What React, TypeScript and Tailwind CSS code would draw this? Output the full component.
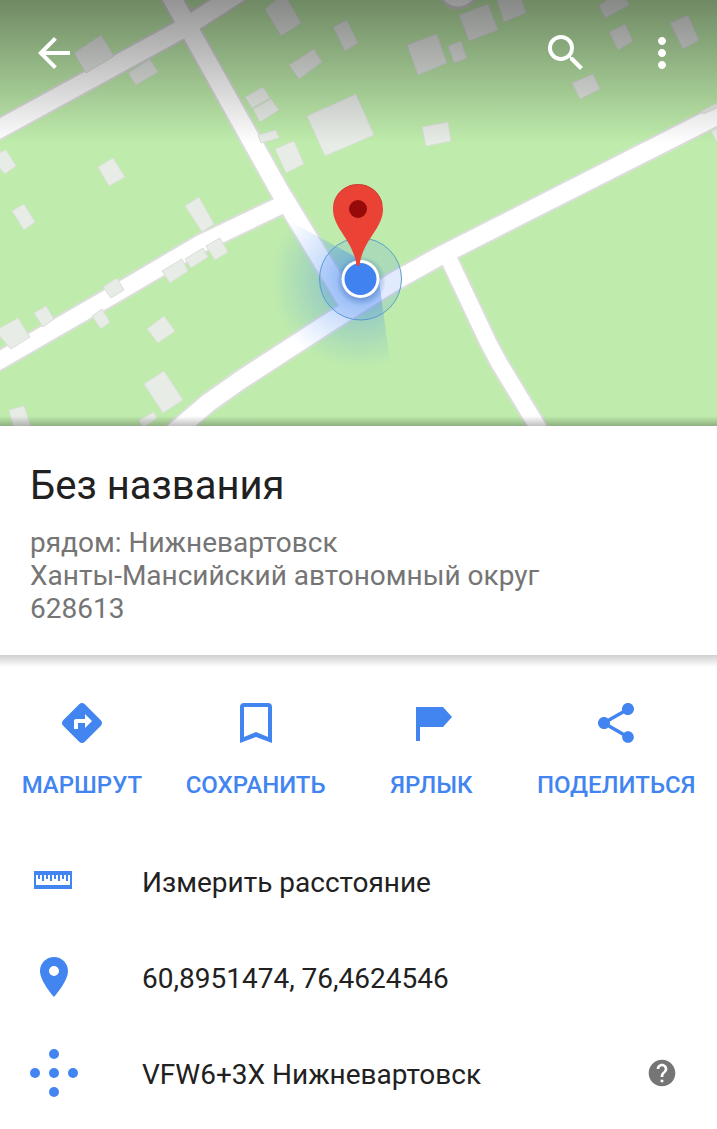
import React from 'react';
import { MdArrowBack, MdDirections, MdHelp, MdMoreVert, MdPlace, MdSearch, MdShare } from 'react-icons/md';

const ROADS = [
  { d: 'M-10 134 L184 28 L226 1 L262 -22', outer: 22, inner: 18 },
  { d: 'M166 -12 L173 0 L279 190 L352 310', outer: 22, inner: 18 },
  { d: 'M-10 366 L115 294 L200 244 L290 201', outer: 21, inner: 17 },
  { d: 'M172 434 L208 403 L242 379 L330 322 L395 281 L440 256 L730 109', outer: 22, inner: 18 },
  { d: 'M448 257 L488 342 L498 361 L542 434', outer: 20, inner: 16 },
];

const BUILDINGS = [
  '74,53 101,35 114,56 86,73',
  '128,73 150,59 158,72 136,85',
  '-4,154 6,150 16,166 5,174 -4,164',
  '98,167 113,158 125,177 109,186',
  '12,211 24,204 35,222 24,230',
  '185,206 199,197 214,224 202,232',
  '265,9 279,-2 288,0 301,23 281,36',
  '333,27 347,20 358,43 345,51',
  '289,65 314,49 322,62 299,79',
  '245,97 263,87 270,98 252,108',
  '253,109 271,99 279,110 260,122',
  '258,135 276,130 279,138 261,143',
  '275,149 294,141 304,164 286,173',
  '307,116 356,94 374,135 325,156',
  '407,45 437,34 447,63 418,75',
  '448,46 461,41 467,58 454,63',
  '459,15 488,4 498,30 469,41',
  '496,-2 520,-6 526,13 504,22',
  '599,5 614,-4 626,-2 629,5 605,18',
  '609,32 625,24 633,41 618,50',
  '670,23 688,15 699,40 683,49',
  '572,83 593,74 600,89 580,99',
  '422,127 448,122 451,141 426,146',
  '702,111 722,100 722,106 703,114',
  '711,131 724,126 724,156',
  '0,328 18,318 30,337 11,349 -2,334',
  '34,313 46,306 54,319 43,327',
  '103,287 117,278 124,290 111,298',
  '92,316 102,309 110,322 101,329',
  '162,271 182,259 188,271 170,283',
  '185,259 203,248 208,257 191,268',
  '206,246 220,238 228,252 215,260',
  '147,329 164,316 175,331 158,343',
  '144,384 164,371 183,400 163,413',
  '9,410 24,406 32,430 14,430',
  '139,420 154,412 157,418 143,428',
];

const MapView: React.FC = () => (
  <svg
    viewBox="0 0 717 426"
    preserveAspectRatio="xMidYMid slice"
    className="block h-[426px] w-full bg-[#bfecac]"
    role="img"
    aria-label="Карта"
  >
    <defs>
      <radialGradient id="beam" gradientUnits="userSpaceOnUse" cx="360" cy="279" r="90">
        <stop offset="0.15" stopColor="#3f83f1" stopOpacity="0.5" />
        <stop offset="0.5" stopColor="#4a8cf0" stopOpacity="0.26" />
        <stop offset="0.8" stopColor="#4a8cf0" stopOpacity="0.1" />
        <stop offset="1" stopColor="#4a8cf0" stopOpacity="0" />
      </radialGradient>
      <radialGradient id="dotShadow" gradientUnits="userSpaceOnUse" cx="361" cy="281" r="25">
        <stop offset="0.7" stopColor="#1c4f9c" stopOpacity="0.3" />
        <stop offset="1" stopColor="#1c4f9c" stopOpacity="0" />
      </radialGradient>
    </defs>

    {ROADS.map((road) => (
      <path key={road.d} d={road.d} fill="none" stroke="#dcdedb" strokeWidth={road.outer} strokeLinejoin="round" />
    ))}
    <circle cx="458" cy="-12" r="20" fill="#fff" stroke="#dcdedb" strokeWidth="3" />
    {ROADS.map((road) => (
      <path key={road.d} d={road.d} fill="none" stroke="#fff" strokeWidth={road.inner} strokeLinejoin="round" />
    ))}
    {BUILDINGS.map((points) => (
      <polygon key={points} points={points} fill="#e8ece7" stroke="#dadfd9" strokeWidth="1" />
    ))}

    {/* Current location with accuracy circle and heading beam */}
    <circle cx="360.500" cy="279" r="41" fill="#4285f4" fillOpacity="0.16" stroke="#5d9fc9" strokeWidth="1" />
    <path d="M354 256 L286 219 A96 96 0 0 0 391 370 L379 280 Z" fill="url(#beam)" />
    <circle cx="361" cy="281" r="25" fill="url(#dotShadow)" />
    <circle cx="360.500" cy="279" r="19" fill="#fff" />
    <circle cx="360.500" cy="279" r="16" fill="#4083f0" />

    {/* Pin */}
    <path
      d="M358 184 C344 184 333 195 333 209 C333 228 351 238 356 262 Q356 266 358 266 Q360 266 360 262 C365 238 383 228 383 209 C383 195 372 184 358 184 Z"
      fill="#ea4335"
    />
    <path d="M334 204 A24.500 24.500 0 0 1 382 204" fill="none" stroke="#c9463a" strokeWidth="1" />
    <circle cx="358" cy="209" r="9" fill="#960a0a" />
  </svg>
);

const BookmarkIcon: React.FC = () => (
  <svg viewBox="0 0 48 48" className="size-12" fill="currentColor" aria-hidden="true">
    <path d="M12 4h24a4 4 0 0 1 4 4v36l-16-6-16 6V8a4 4 0 0 1 4-4Zm0 4v30l12-5 12 5V8Z" />
  </svg>
);

const FlagIcon: React.FC = () => (
  <svg viewBox="0 0 48 48" className="size-12" fill="currentColor" aria-hidden="true">
    <path d="M9 8h27l9 10-9 10H13v14H9Z" />
  </svg>
);

const RulerIcon: React.FC = () => (
  <svg viewBox="0 0 48 48" className="size-12" fill="currentColor" aria-hidden="true">
    <path
      fillRule="evenodd"
      d="M4 14h38v18H4Zm2 4v10h34V18h-2v6h-2v-6h-2v4h-2v-4h-2v6h-2v-6h-2v4h-2v-4h-2v6h-2v-6h-2v4h-2v-4h-2v6h-2v-6h-2v4H8v-4Z"
    />
  </svg>
);

const PlusCodeIcon: React.FC = () => (
  <svg viewBox="0 0 48 48" className="size-12" fill="currentColor" aria-hidden="true">
    <circle cx="24" cy="5" r="5" />
    <circle cx="5" cy="24" r="5" />
    <circle cx="24" cy="24" r="5" />
    <circle cx="43" cy="24" r="5" />
    <circle cx="24" cy="43" r="5" />
  </svg>
);

const actions = [
  { label: 'МАРШРУТ', icon: <MdDirections className="size-12" /> },
  { label: 'СОХРАНИТЬ', icon: <BookmarkIcon /> },
  { label: 'ЯРЛЫК', icon: <FlagIcon /> },
  { label: 'ПОДЕЛИТЬСЯ', icon: <MdShare className="size-12" /> },
];

const details = [
  { label: 'Измерить расстояние', icon: <RulerIcon /> },
  { label: '60,8951474, 76,4624546', icon: <MdPlace className="size-12" /> },
  { label: 'VFW6+3X Нижневартовск', icon: <PlusCodeIcon />, help: true },
];

const App: React.FC = () => {
  return (
    <div className="min-h-screen bg-white font-['Roboto',sans-serif] text-[#212121]">
      <div className="relative">
        <MapView />
        <header className="absolute inset-x-0 top-0 flex h-36 items-start bg-linear-to-b from-black/42 to-transparent pt-[29px] pr-[31px] pl-[30px] text-white">
          <button type="button" aria-label="Назад">
            <MdArrowBack className="size-12" />
          </button>
          <div className="ml-auto flex gap-12">
            <button type="button" aria-label="Поиск">
              <MdSearch className="size-12" />
            </button>
            <button type="button" aria-label="Ещё">
              <MdMoreVert className="size-12" />
            </button>
          </div>
        </header>
        <div className="absolute inset-x-0 bottom-0 h-2.5 bg-linear-to-b from-transparent to-black/25" />
      </div>

      <section className="px-[30px] pt-9 pb-[30px]">
        <h1 className="text-[40px] leading-[48px]">Без названия</h1>
        <p className="mt-4 text-[28px] leading-[33px] text-[#757575]">
          рядом: Нижневартовск
          <br />
          Ханты-Мансийский автономный округ
          <br />
          628613
        </p>
      </section>
      <div className="h-3 bg-linear-to-b from-[#d0d0d0] to-white" />

      <div className="grid grid-cols-[164fr_184fr_168fr_202fr] pt-8 text-[#4285f0]">
        {actions.map((action) => (
          <button key={action.label} type="button" className="flex flex-col items-center gap-6">
            {action.icon}
            <span className="text-2xl leading-7 font-medium">{action.label}</span>
          </button>
        ))}
      </div>

      <ul className="pt-[34px]">
        {details.map((item) => (
          <li key={item.label} className="flex h-24 items-center pr-[39px] pl-[30px]">
            <button type="button" className="flex flex-1 items-center gap-16 text-left">
              <span className="text-[#4285f0]">{item.icon}</span>
              <span className="pt-1 text-[28px] leading-8">{item.label}</span>
            </button>
            {item.help && (
              <button type="button" aria-label="Справка" className="text-[#757575]">
                <MdHelp className="size-8" />
              </button>
            )}
          </li>
        ))}
      </ul>
    </div>
  );
};

export default App;
